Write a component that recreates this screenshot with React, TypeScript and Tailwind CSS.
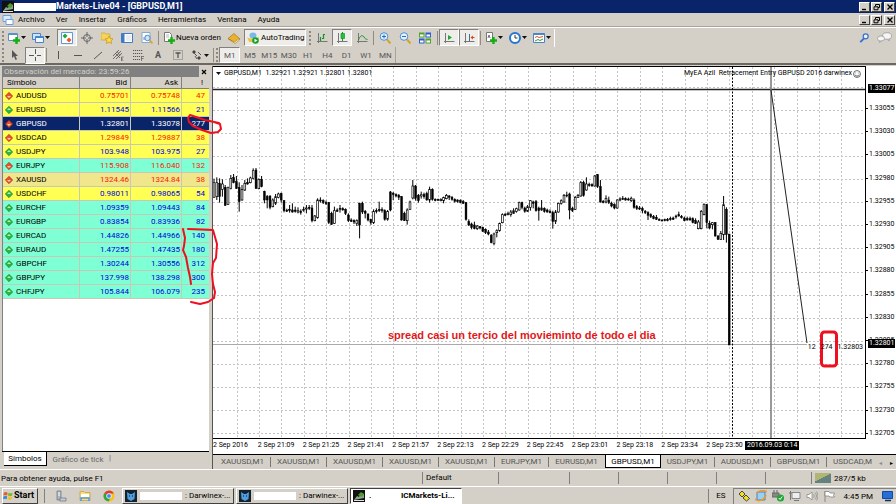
import type { ReactNode } from "react";
import clsx from "clsx";

type Quote = {
  symbol: string;
  bid: string;
  ask: string;
  spread: number;
  up: boolean;
  tone: "yellow" | "aqua" | "sand" | "selected";
  red?: boolean;
};

const quotes: Quote[] = [
  { symbol: "AUDUSD", bid: "0.75701", ask: "0.75748", spread: 47, up: false, tone: "yellow", red: true },
  { symbol: "EURUSD", bid: "1.11545", ask: "1.11566", spread: 21, up: true, tone: "yellow" },
  { symbol: "GBPUSD", bid: "1.32801", ask: "1.33078", spread: 277, up: false, tone: "selected" },
  { symbol: "USDCAD", bid: "1.29849", ask: "1.29887", spread: 38, up: false, tone: "yellow", red: true },
  { symbol: "USDJPY", bid: "103.948", ask: "103.975", spread: 27, up: true, tone: "yellow" },
  { symbol: "EURJPY", bid: "115.908", ask: "116.040", spread: 132, up: false, tone: "aqua", red: true },
  { symbol: "XAUUSD", bid: "1324.46", ask: "1324.84", spread: 38, up: false, tone: "sand", red: true },
  { symbol: "USDCHF", bid: "0.98011", ask: "0.98065", spread: 54, up: true, tone: "yellow" },
  { symbol: "EURCHF", bid: "1.09359", ask: "1.09443", spread: 84, up: true, tone: "aqua" },
  { symbol: "EURGBP", bid: "0.83854", ask: "0.83936", spread: 82, up: true, tone: "aqua" },
  { symbol: "EURCAD", bid: "1.44826", ask: "1.44966", spread: 140, up: true, tone: "aqua" },
  { symbol: "EURAUD", bid: "1.47255", ask: "1.47435", spread: 180, up: true, tone: "aqua" },
  { symbol: "GBPCHF", bid: "1.30244", ask: "1.30556", spread: 312, up: true, tone: "aqua" },
  { symbol: "GBPJPY", bid: "137.998", ask: "138.298", spread: 300, up: true, tone: "aqua" },
  { symbol: "CHFJPY", bid: "105.844", ask: "106.079", spread: 235, up: true, tone: "aqua" },
];

const tones = {
  yellow: "bg-[#ffff54]",
  aqua: "bg-[#7fffd4]",
  sand: "bg-[#f0e68c]",
  selected: "bg-[#0a246a] text-white",
};

// high, body top, body bottom, low, filled (1) or hollow (0); thirds of a pixel
const candles = [
  [86,98,142,142,0],[82,98,140,150,0],[85,100,140,158,1],[88,102,118,140,0],[105,112,166,168,1],[110,113,163,165,0],
  [75,85,115,118,0],[72,83,98,100,1],[78,95,115,117,1],[97,112,155,185,1],[105,118,150,152,0],[90,100,120,123,0],
  [85,98,102,104,1],[80,84,98,100,0],[55,62,85,88,0],[54,60,115,117,1],[85,88,116,118,0],[78,88,110,112,1],
  [122,124,150,160,1],[135,140,150,175,1],[136,138,172,178,1],[145,150,170,172,0],[132,140,160,165,0],[128,132,142,145,0],
  [128,130,150,158,1],[150,152,182,187,1],[176,180,184,186,1],[165,178,182,188,1],[160,180,186,188,1],[170,180,184,188,1],
  [172,182,186,190,0],[178,184,188,194,1],[170,178,180,185,0],[165,174,176,190,0],[165,172,174,180,1],[165,174,212,217,1],
  [195,198,212,214,0],[145,150,203,206,0],[142,150,152,158,1],[148,152,158,162,1],[152,158,160,165,1],[156,158,218,222,1],
  [185,190,223,225,1],[170,182,220,222,0],[175,180,184,186,1],[165,175,178,188,1],[172,176,180,182,1],[175,178,190,195,1],
  [190,195,212,216,1],[205,210,214,216,1],[208,212,216,222,1],[208,212,220,228,0],[158,160,225,265,1],[155,160,186,192,1],
  [180,184,190,205,1],[190,192,210,214,1],[206,208,218,224,1],[178,184,218,222,0],[175,182,184,190,1],[155,178,182,186,1],
  [172,178,182,188,0],[178,182,208,212,1],[180,184,208,212,0],[123,126,180,184,1],[126,130,134,150,1],[130,134,138,142,1],
  [132,136,142,150,1],[138,140,210,212,1],[185,190,212,213,1],[175,180,212,224,0],[152,156,178,180,0],[90,108,144,148,0],
  [105,108,145,152,1],[132,136,152,158,1],[125,134,138,146,0],[128,134,140,146,1],[125,130,150,152,1],[110,118,150,158,0],
  [115,118,148,152,1],[145,148,152,154,1],[146,148,150,152,1],[145,148,152,154,0],[140,142,152,160,0],[132,136,146,148,0],
  [135,138,142,150,1],[138,142,148,152,1],[145,148,154,158,1],[148,150,155,158,1],[148,152,158,160,1],[150,155,160,162,1],
  [156,158,208,212,1],[208,214,225,228,1],[218,222,232,238,1],[215,225,236,238,1],[225,228,236,240,0],[228,230,234,238,1],
  [230,232,244,246,1],[235,238,248,252,1],[240,246,252,256,1],[252,256,278,280,1],[248,252,280,286,0],[238,242,248,262,0],
  [218,220,242,245,0],[190,194,218,220,0],[190,192,196,198,1],[185,190,194,196,0],[180,186,194,200,0],[175,182,190,192,0],
  [173,176,184,188,0],[155,158,180,182,0],[155,158,172,178,1],[170,174,184,188,1],[165,170,184,186,0],[150,152,172,182,0],
  [152,156,160,175,1],[150,155,182,185,1],[170,174,182,212,1],[150,174,180,182,0],[172,176,184,188,1],[176,180,186,188,1],
  [178,184,188,190,1],[182,188,215,236,1],[180,186,214,222,0],[158,160,186,188,0],[148,152,160,164,0],[132,136,156,158,0],
  [125,135,138,142,1],[128,132,180,208,1],[170,176,182,186,1],[138,142,178,180,0],[132,136,142,144,0],[93,98,138,140,0],
  [92,97,136,140,1],[82,102,120,122,0],[98,104,106,110,1],[100,104,108,110,1],[75,78,108,110,0],[72,74,110,114,1],
  [90,110,156,158,1],[150,154,158,160,1],[136,145,156,160,0],[140,150,158,162,1],[155,160,168,172,1],[160,164,174,178,1],
  [148,150,174,176,0],[142,147,150,154,0],[138,145,148,150,1],[142,146,150,152,1],[143,147,150,152,1],[140,145,152,156,0],
  [145,150,172,176,1],[165,170,176,180,1],[168,174,177,180,1],[170,176,182,190,1],[180,184,188,192,1],[184,188,196,210,1],
  [190,194,200,204,1],[195,200,206,208,1],[195,202,208,210,1],[205,208,210,212,1],[208,210,212,214,1],[206,209,212,214,1],
  [204,208,212,214,1],[200,206,208,212,1],[200,204,208,210,1],[194,198,200,206,1],[185,194,198,200,1],[195,200,202,206,1],
  [200,204,212,214,1],[200,206,210,212,1],[200,206,210,212,1],[202,206,218,220,1],[205,212,220,222,1],[210,216,236,238,0],
  [180,184,236,238,0],[160,164,194,196,0],[162,164,218,235,1],[212,220,234,238,1],[216,218,224,238,0],[216,218,258,260,1],
  [255,258,268,270,1],[243,250,268,270,0],[138,164,254,270,0],[172,178,254,278,1],[252,252,585,585,1],
];

const prices = [
  "1.33055", "1.33030", "1.33005", "1.32980", "1.32955", "1.32930", "1.32905", "1.32880",
  "1.32855", "1.32830", "1.32805", "1.32780", "1.32755", "1.32730", "1.32705",
];

const times = [
  "2 Sep 2016", "2 Sep 21:09", "2 Sep 21:25", "2 Sep 21:41", "2 Sep 21:57", "2 Sep 22:13",
  "2 Sep 22:29", "2 Sep 22:45", "2 Sep 23:01", "2 Sep 23:18", "2 Sep 23:34", "2 Sep 23:50",
];

const chartTabs = [
  "XAUUSD,M1", "XAUUSD,M1", "XAUUSD,M1", "XAUUSD,M1", "XAUUSD,M1", "EURJPY,M1",
  "EURUSD,M1", "GBPUSD,M1", "USDJPY,M1", "AUDUSD,M1", "GBPUSD,M1",
];

const Icon = ({ children, className = "size-3" }: { children: ReactNode; className?: string }) => (
  <svg viewBox="0 0 12 12" fill="none" className={clsx("shrink-0", className)} aria-hidden="true">
    {children}
  </svg>
);

const Plus = () => <path d="M8.500 5v7M5 8.500h7" stroke="#12b012" strokeWidth="2.400" />;

const Axes = () => <path d="M2.500 1v10M1 9.500h10.500" stroke="#777" />;

const Caret = () => (
  <svg viewBox="0 0 5 3" className="h-[3px] w-[5px] shrink-0" aria-hidden="true">
    <path d="M0 0h5L2.500 3z" fill="#111" />
  </svg>
);

const Grip = () => <span className="mx-px h-3.5 w-0.5 shrink-0 border-l-2 border-dotted border-[#8c8880]" />;

const Sep = () => <span className="mx-px h-3.5 w-px shrink-0 bg-[#908c84]" />;

type ToolProps = { label: string; children: ReactNode; pressed?: boolean; menu?: boolean };

const Tool = ({ label, children, pressed, menu }: ToolProps) => (
  <button
    type="button"
    aria-label={label}
    className={clsx(
      "flex h-[17px] shrink-0 items-center",
      menu ? "w-6 gap-px pl-[3px]" : "w-5 justify-center",
      pressed && "border border-t-[#808080] border-r-white border-b-white border-l-[#808080] bg-[#efede9]",
    )}
  >
    {children}
    {menu && <Caret />}
  </button>
);

const WindowButtons = () => (
  <div className="flex gap-px pr-px">
    {["Minimizar", "Restaurar", "Cerrar"].map((label, i) => (
      <button
        key={label}
        type="button"
        aria-label={label}
        className={clsx(
          "flex h-2.5 w-[11px] items-center justify-center border border-t-white border-r-[#404040] border-b-[#404040] border-l-white bg-[#d4d0c8]",
          i === 2 && "ml-px",
        )}
      >
        <svg viewBox="0 0 8 8" className="size-2" fill="none" stroke="#000" aria-hidden="true">
          {i === 0 && <path d="M1 6.500h4" strokeWidth="1.400" />}
          {i === 1 && <path d="M2.500 3V1.500h4v3H5M1 3.800h4v3H1z" />}
          {i === 2 && <path d="M1.500 1.500l5 5M6.500 1.500l-5 5" strokeWidth="1.300" />}
        </svg>
      </button>
    ))}
  </div>
);

const AppLogo = () => (
  <Icon>
    <path d="M0 0h12v12H0z" fill="#111" />
    <path d="M1 10l3-4 2 1 2-4 3 1v4z" fill="#8aa58a" />
    <path d="M5 5l3-3 3 2-2 3z" fill="#4f9a2c" />
    <path d="M1 10.500h10" stroke="#e5e5e5" />
  </Icon>
);

const TitleBar = () => (
  <header className="flex h-[13px] items-center bg-[#0a246a] text-white">
    <span className="w-3.5 pl-0.5"><AppLogo /></span>
    <span className="h-2 w-[42px] bg-white" />
    <h1 className="flex-1 text-[9px] font-bold">Markets-Live04 - [GBPUSD,M1]</h1>
    <WindowButtons />
  </header>
);

const MenuBar = () => (
  <nav className="flex h-3.5 items-center border-b border-[#a8a49c]">
    <Icon className="mx-0.5 size-3">
      <path d="M1 1.500h8v6H1z" fill="#dcecff" stroke="#6d9fdc" />
      <path d="M4 5.500h7v5H4z" fill="#fff" stroke="#6d9fdc" />
    </Icon>
    <div className="flex flex-1 gap-[11px] pl-0.5">
      {["Archivo", "Ver", "Insertar", "Gráficos", "Herramientas", "Ventana", "Ayuda"].map((item) => (
        <button key={item} type="button">{item}</button>
      ))}
    </div>
    <WindowButtons />
  </nav>
);

const MainToolbar = () => (
  <div className="flex h-5 items-center border-t border-white pl-px">
    <Grip />
    <Tool label="Nuevo gráfico" menu>
      <Icon><path d="M.5 1.500h9v7h-9z" fill="#fff" stroke="#5b8fc9" /><path d="M.5 2.500h9" stroke="#5b8fc9" /><Plus /></Icon>
    </Tool>
    <Tool label="Perfiles" menu>
      <Icon><path d="M.5 1.500h8v6h-8z" fill="#cfe3fa" stroke="#4783c8" /><path d="M3.500 4.500h8v6h-8z" fill="#eef6ff" stroke="#4783c8" /><path d="M3.500 5.500h8" stroke="#4783c8" /></Icon>
    </Tool>
    <span className="w-1" />
    <Tool label="Observación del mercado" pressed>
      <Icon><path d="M.5.5h11v11H.5z" fill="#fff" stroke="#5b9bdc" /><path d="M1.500 4l2.500-2.500L6.500 4 4 6.500z" fill="#22a83a" /><path d="M5.500 8L8 5.500l2.500 2.500L8 10.500z" fill="#f0562b" /></Icon>
    </Tool>
    <Tool label="Ventana de datos">
      <Icon><circle cx="6" cy="6" r="3.500" stroke="#666" /><path d="M6 0v5M6 7v5M0 6h5M7 6h5" stroke="#666" /></Icon>
    </Tool>
    <Tool label="Navegador">
      <Icon><path d="M0 1h4l1 1h4v6H0z" fill="#f5d35c" stroke="#c69a1e" strokeWidth=".6" /><path d="M8 4l1.200 2.500 2.800.4-2 1.900.5 2.700L8 10.200 5.500 11.500 6 8.800 4 6.900l2.800-.4z" fill="#ffd83c" stroke="#b88a12" strokeWidth=".6" /></Icon>
    </Tool>
    <Tool label="Terminal">
      <Icon><path d="M.5 1.500h11v9H.5z" fill="#fff" stroke="#3d7bc7" /><path d="M1 2h2.500v8H1z" fill="#3d7bc7" /><path d="M5 4h5.500M5 6h5.500M5 8h5.500" stroke="#b8cde8" strokeWidth=".7" /></Icon>
    </Tool>
    <Tool label="Probador de estrategias">
      <Icon><path d="M1 .5h8v10H1z" fill="#fff" stroke="#86a9cf" /><path d="M3 8V5M5 7V3M7 8V4" stroke="#7797bc" /><circle cx="6.500" cy="6" r="2.700" fill="#d7ebff" fillOpacity=".8" stroke="#4b88cc" /><path d="M8.500 8l3 3.500" stroke="#d9a227" strokeWidth="1.600" /></Icon>
    </Tool>
    <Sep />
    <button type="button" className="flex h-[17px] w-16 shrink-0 items-center gap-px pl-[3px] whitespace-nowrap">
      <Icon><path d="M1.500.5h5l2 2v7h-7z" fill="#fff" stroke="#777" /><path d="M3 3h3M3 5h3" stroke="#999" strokeWidth=".7" /><Plus /></Icon>
      Nueva orden
    </button>
    <Tool label="MetaEditor">
      <Icon><path d="M0 6.500l6-5 6 5.500-5 4z" fill="#e7b32f" stroke="#9a6d10" strokeWidth=".6" /><path d="M.5 7l6 3 5-3.500v1.500L7 11.500z" fill="#fff3c4" stroke="#9a6d10" strokeWidth=".5" /></Icon>
    </Tool>
    <button type="button" className="flex h-[17px] w-[62px] shrink-0 items-center gap-0.5 border border-t-[#808080] border-r-white border-b-white border-l-[#808080] bg-[#efede9] pl-0.5 whitespace-nowrap">
      <Icon><ellipse cx="6" cy="3.500" rx="3.500" ry="3" fill="#7db9e8" /><path d="M0 5c3 2 9 2 12 0l-1 5H2z" fill="#edc44a" /><circle cx="8.500" cy="8.500" r="3.300" fill="#16a32a" /><path d="M7.500 6.800v3.400l3-1.700z" fill="#fff" /></Icon>
      AutoTrading
    </button>
    <span className="w-0.5" />
    <Grip />
    <Tool label="Gráfico de barras">
      <Icon><Axes /><path d="M4.500 5v4M7.500 2v5M6 6.500h1.500M7.500 2.500H9" stroke="#14942a" strokeWidth="1.200" /></Icon>
    </Tool>
    <Tool label="Gráfico de velas" pressed>
      <Icon><Axes /><path d="M6.500 0v9" stroke="#14942a" /><path d="M5 1.500h3.500v5H5z" fill="#26c13f" stroke="#14942a" strokeWidth=".7" /></Icon>
    </Tool>
    <Tool label="Gráfico de líneas">
      <Icon><Axes /><path d="M2.500 8C4 3 7 3 8 5s2 2 3.500 2.500" stroke="#14942a" /></Icon>
    </Tool>
    <Sep />
    <Tool label="Acercar">
      <Icon><circle cx="5" cy="4.500" r="3.800" fill="#e2f1ff" stroke="#4a8ed6" /><path d="M3 4.500h4M5 2.500v4" stroke="#2b6cb8" /><path d="M8 7.500l3.500 4" stroke="#d8a428" strokeWidth="2" /></Icon>
    </Tool>
    <Tool label="Alejar">
      <Icon><circle cx="5" cy="4.500" r="3.800" fill="#e2f1ff" stroke="#4a8ed6" /><path d="M3 4.500h4" stroke="#2b6cb8" /><path d="M8 7.500l3.500 4" stroke="#d8a428" strokeWidth="2" /></Icon>
    </Tool>
    <Tool label="Mosaico">
      <Icon><path d="M0 .5h5.500v5H0zM6.500 6.500H12v5H6.500z" fill="#4da62a" /><path d="M6.500.5H12v5H6.500zM0 6.500h5.500v5H0z" fill="#2f5fd0" /><path d="M1 2.500h3.500v2H1zM7.500 2.500H11v2H7.500zM1 8.500h3.500v2H1zM7.500 8.500H11v2H7.500z" fill="#fff" /></Icon>
    </Tool>
    <span className="w-px" />
    <Sep />
    <Tool label="Desplazamiento automático" pressed>
      <Icon><Axes /><path d="M5 3v5l4-2.500z" fill="#21a637" /></Icon>
    </Tool>
    <Tool label="Desplazar gráfico" pressed>
      <Icon><Axes /><path d="M6.500 2v7" stroke="#3f6fa8" /><path d="M7.500 5.500L10 3.500v4z" fill="#d84a1b" /><path d="M9 5.500h2.500" stroke="#d84a1b" /></Icon>
    </Tool>
    <Sep />
    <Tool label="Indicadores" menu>
      <Icon><path d="M1.500.5h6v9h-6z" fill="#fff" stroke="#777" /><path d="M3 6l1-3 1 3" stroke="#555" strokeWidth=".8" /><Plus /></Icon>
    </Tool>
    <Tool label="Períodos" menu>
      <Icon><circle cx="6" cy="6" r="5" fill="#fff" stroke="#2474d2" strokeWidth="2" /><path d="M6 3v3h2.500" stroke="#333" /></Icon>
    </Tool>
    <Tool label="Plantillas" menu>
      <Icon><path d="M.5 1.500h11v9H.5z" fill="#fff" stroke="#4783c8" /><path d="M.5 2.200h11" stroke="#4783c8" strokeWidth="1.500" /><path d="M2 5.500l2-1 2 1 4-1" stroke="#d05a35" /><path d="M2 9l3-1.500 2 1 3-1.500" stroke="#2c9c48" /></Icon>
    </Tool>
    <span className="h-[18px] w-px bg-white" />
    <div className="ml-auto flex items-center pr-0.5">
      <Tool label="Buscar">
        <Icon className="size-2.5"><circle cx="8" cy="4" r="3" fill="#e9f2ff" stroke="#3970d0" strokeWidth="1.500" /><path d="M6 6.500L1.500 11" stroke="#3970d0" strokeWidth="2.400" /></Icon>
      </Tool>
      <Tool label="Chat">
        <svg viewBox="0 0 15 11" className="h-[11px] w-[15px]" fill="#f5f5f5" stroke="#999" strokeWidth=".8" aria-hidden="true">
          <ellipse cx="10" cy="4" rx="4.500" ry="3.300" /><path d="M11 7l1 2 .8-2.500" />
          <ellipse cx="4" cy="6.500" rx="3.500" ry="2.600" /><path d="M3 9L2.500 10.500 4.500 9" />
        </svg>
      </Tool>
    </div>
  </div>
);

const DrawingToolbar = () => (
  <div className="flex h-[18px] items-center border-b-2 border-[#6b6862] pl-px text-[#555]">
    <Grip />
    <Tool label="Cursor"><Icon><path d="M3 1v8l2-1.800L6.500 11l1.500-.7L6.500 7H9z" fill="#555" /></Icon></Tool>
    <Tool label="Cruz" pressed><Icon><path d="M6.500 0v5M6.500 8v4M0 6.500h5M8 6.500h4" stroke="#555" /></Icon></Tool>
    <Sep />
    <Tool label="Línea vertical"><Icon><path d="M6.500 2v8" stroke="#555" /></Icon></Tool>
    <Tool label="Línea horizontal"><Icon><path d="M2 6.500h8" stroke="#555" /></Icon></Tool>
    <Tool label="Línea de tendencia"><Icon><path d="M2 10l8-7" stroke="#555" /></Icon></Tool>
    <Tool label="Canal equidistante"><Icon><path d="M1 7l6-6M1 10l8-8M4 10l6-6M3 4l5 5M5 2l3 5" stroke="#555" strokeWidth=".8" /><path d="M9.500 8v4M11.500 8H9.500M11 10H9.500M11.500 12H9.500" stroke="#555" strokeWidth=".7" /></Icon></Tool>
    <Tool label="Fibonacci"><Icon><path d="M1 1.500h10M1 4.500h10M1 7.500h7M1 10.500h7" stroke="#555" strokeDasharray="1.200 .8" /><path d="M9.500 7v5M12 7.500H9.500M11.500 9.500H9.500" stroke="#555" strokeWidth=".7" /></Icon></Tool>
    <Tool label="Texto"><span className="text-[9px] font-bold">A</span></Tool>
    <Tool label="Etiqueta de texto"><Icon><path d="M1.500 1.500h9v9h-9z" stroke="#777" strokeDasharray="1 1" /><path d="M3.500 4h5M6 4v5" stroke="#555" strokeWidth="1.300" /></Icon></Tool>
    <Tool label="Flechas" menu><Icon><path d="M1 3l2-2 2 2-2 2zM6 9l2-2 2 2-2 2z" fill="#444" /><path d="M3 4l3 3M7 3l3 3M4 7l2 3" stroke="#555" /></Icon></Tool>
    <Sep />
    <Grip />
    <div className="flex w-44">
      {["M1", "M5", "M15", "M30", "H1", "H4", "D1", "W1", "MN"].map((frame, i) => (
        <button
          key={frame}
          type="button"
          className={clsx(
            "flex h-4 flex-1 items-center justify-center",
            i === 0 && "border border-t-[#808080] border-r-white border-b-white border-l-[#808080] bg-[#efede9]",
          )}
        >
          {frame}
        </button>
      ))}
    </div>
    <span className="h-4 w-px bg-[#a8a49c]" />
  </div>
);

const MarketWatch = () => (
  <aside className="relative flex w-[212px] shrink-0 flex-col pl-0.5">
    <div className="mr-[3px] flex h-[11px] items-center justify-between bg-[#808080] pl-0.5 text-[#d4d0c8]">
      <h2>Observación del mercado: 23:59:26</h2>
      <button type="button" aria-label="Cerrar panel" className="flex h-full w-2.5 items-center justify-center bg-[#d4d0c8]">
        <svg viewBox="0 0 6 6" className="size-1.5" aria-hidden="true"><path d="M1 1l4 4M5 1L1 5" stroke="#000" strokeWidth="1.200" /></svg>
      </button>
    </div>
    <div className="mr-[3px] flex-1 border-l border-[#808080] bg-white">
      <table className="w-full table-fixed border-separate border-spacing-0 text-right">
        <thead>
          <tr className="bg-[#d4d0c8]">
            <th className="h-3 border-r border-b border-[#808080] p-0 pl-1 text-left font-normal">Símbolo</th>
            <th className="w-[51px] border-r border-b border-[#808080] p-0 pr-[3px] font-normal">Bid</th>
            <th className="w-[51px] border-r border-b border-[#808080] p-0 pr-[3px] font-normal">Ask</th>
            <th className="w-[27px] border-b border-[#808080] p-0 pr-1.5 font-normal">!</th>
          </tr>
        </thead>
        <tbody>
          {quotes.map((q) => (
            <tr key={q.symbol} className={tones[q.tone]}>
              <td className="h-3.5 border-r border-b border-[#c8c8b8] p-0 text-left">
                <span className="flex items-center gap-[3px] pl-0.5">
                  <svg viewBox="0 0 8 8" className="size-2" aria-hidden="true">
                    <path d="M4 .3L7.700 4 4 7.700.3 4z" fill={q.up ? "#2fb344" : "#e8502e"} stroke={q.up ? "#157a26" : "#a52a12"} strokeWidth=".6" />
                    <path d={q.up ? "M4 2l2 2H2z" : "M4 6l2-2H2z"} fill={q.up ? "#b5f5a8" : "#ffd0a0"} />
                  </svg>
                  {q.symbol}
                </span>
              </td>
              {[q.bid, q.ask, q.spread].map((value, i) => (
                <td
                  key={i}
                  className={clsx(
                    "border-b border-[#c8c8b8] p-0",
                    i < 2 ? "border-r pr-px" : "pr-1",
                    q.tone !== "selected" && (q.red ? "text-[#ff2000]" : "text-[#0000e0]"),
                  )}
                >
                  {value}
                </td>
              ))}
            </tr>
          ))}
        </tbody>
      </table>
    </div>
    <div className="mr-[3px] flex h-[18px] border-t border-black pl-0.5">
      <button type="button" className="h-3.5 w-[43px] border-r border-b border-black bg-white">Símbolos</button>
      <button type="button" className="h-3.5 w-[62px] text-[#666]">Gráfico de tick</button>
      <span className="text-[#666]">|</span>
    </div>
    {/* hand-drawn marks over the spread column */}
    <svg viewBox="0 0 230 250" className="pointer-events-none absolute top-0 left-0 z-10 h-[250px] w-[230px]" fill="none" stroke="#ee1020" strokeWidth="2" strokeLinecap="round" strokeLinejoin="round" aria-hidden="true">
      <path d="M219 57L205 54 190 49 188 52 189 56 193 60 202 64 211 67 218 66 221 63 220 58 214 56" />
      <path d="M183 163L185 172 184 180 183 184 186 191 188 202 190 211 191 218" />
      <path d="M188 163L213 164 215 171 217 178 216 192 213 197 212 208 213 218 215 226 214 232 208 236 200 238 191 236" />
    </svg>
  </aside>
);

const verticalGrid = Array.from({ length: 28 }, (_, i) => 24 + i * 22.4);
const horizontalGrid = Array.from({ length: 16 }, (_, i) => 20.5 + i * 23.07);

const Plot = () => (
  <svg viewBox="0 0 652 371" preserveAspectRatio="none" className="absolute inset-0 size-full" fill="none" aria-hidden="true">
    <g stroke="#c4c4c4" strokeDasharray="2 2" shapeRendering="crispEdges">
      {verticalGrid.map((x) => <path key={x} d={`M${x} 0V371`} />)}
      {horizontalGrid.map((y) => <path key={y} d={`M0 ${y}H652`} />)}
    </g>
    {/* bid line, crosshair and period separator */}
    <path d="M0 277.500H594" stroke="#aaa" />
    <path d="M0 22.500H652" stroke="#222" strokeWidth="1.500" />
    <path d="M558 0V371" stroke="#777" strokeWidth="1.500" />
    <path d="M519.500 0V371" stroke="#000" strokeDasharray="2 1.500" />
    <g stroke="#000">
      {candles.map(([high, top, bottom, low, filled], i) => {
        const x = 1 + i * 2.8;
        const y = (v: number) => 83 + v / 3;
        return (
          <g key={i}>
            <path d={`M${x} ${y(high)}V${y(low)}`} />
            <rect
              x={x - 0.9}
              y={y(top)}
              width="1.800"
              height={Math.max((bottom - top) / 3, 1)}
              fill={filled ? "#000" : "#fff"}
              strokeWidth={filled ? 0.5 : 0.7}
            />
          </g>
        );
      })}
    </g>
    <path d="M558 23L594 276" stroke="#222" />
    <rect x="608.500" y="265" width="15" height="34" rx="3" stroke="#ee1020" strokeWidth="3" />
  </svg>
);

const Chart = () => (
  <section className="flex min-w-0 flex-1 flex-col border-l border-[#555]">
    <div className="flex flex-1 bg-white text-[7px]">
      <div className="relative flex-1 overflow-hidden border-t border-r border-b border-black">
        <Plot />
        <div className="relative flex items-center justify-between pt-px pr-1 pl-[3px]">
          <p className="flex items-center gap-[3px]"><Caret />GBPUSD,M1&nbsp; 1.32921 1.32921 1.32801 1.32801</p>
          <p className="flex items-center gap-px">
            MyEA Azil&nbsp; Retracement Entry GBPUSD 2016 darwinex
            <Icon className="size-2"><circle cx="6" cy="6" r="5.200" stroke="#222" /><path d="M3 7c1 3 5 3 6 0M4 4v1M8 4v1" stroke="#222" /></Icon>
          </p>
        </div>
        <p className="absolute top-[262px] left-[175px] font-['Liberation_Sans',Arial,sans-serif] text-[11px] leading-3 font-bold whitespace-nowrap text-[#e01818]">
          spread casi un tercio del movieminto de todo el dia
        </p>
        <p className="absolute top-[275px] right-0.5 flex gap-[5px]">
          <span>12</span><span>274</span><span>1.32803</span>
        </p>
      </div>
      <div className="relative flex w-[30px] shrink-0 flex-col justify-between pt-[37px] leading-[11px]">
        {prices.map((price) => (
          <span key={price} className="flex items-center gap-px before:h-px before:w-0.5 before:bg-black">{price}</span>
        ))}
        <span className="absolute top-[18px] left-0.5 bg-black px-px leading-[9px] text-white">1.33077</span>
        <span className="absolute top-[273px] left-0.5 bg-black px-px leading-[9px] text-white">1.32801</span>
      </div>
    </div>
    <div className="relative h-[15px] bg-white text-[7px] leading-3">
      <div className="grid w-[538px] grid-cols-12 whitespace-nowrap">
        {times.map((time) => <span key={time}>{time}</span>)}
      </div>
      <span className="absolute top-0.5 left-[532px] bg-black px-0.5 leading-[9px] whitespace-nowrap text-white">2016.09.03 0:14</span>
    </div>
    <div className="flex h-[15px] overflow-hidden border-t border-black pl-0.5 whitespace-nowrap text-[#555]">
      {chartTabs.map((tab, i) => (
        <button
          key={i}
          type="button"
          className={clsx(
            "flex h-[13px] shrink-0 items-center justify-center",
            tab.includes("JPY") ? "w-[54px]" : "w-14",
            i === 7
              ? "border-x border-b border-black bg-white text-black"
              : "before:mr-auto after:ml-auto after:h-2.5 after:w-px",
            i !== 7 && i !== 6 && "after:bg-[#777]",
          )}
        >
          {tab}
        </button>
      ))}
      <button type="button" className="h-[13px] shrink-0 pr-[3px] pl-1.5 text-left">USDCAD,M</button>
      <button type="button" aria-label="Pestañas anteriores" className="px-1 text-[6px] text-[#888]">◂</button>
      <button type="button" aria-label="Pestañas siguientes" className="px-1 text-[6px] text-black">▸</button>
    </div>
  </section>
);

const StatusBar = () => (
  <footer className="flex h-[17px] items-center border-t border-white">
    <p className="flex-1 pl-px">Para obtener ayuda, pulse F1</p>
    <span className="h-3 w-[76px] shrink-0 border-l border-[#808080] pl-[3px] leading-3">Default</span>
    <span className="h-3 w-[71px] shrink-0 border-l border-[#808080]" />
    {[0, 1, 2, 3].map((i) => (
      <span key={i} className="h-3 w-[49px] shrink-0 border-l border-[#808080]" />
    ))}
    <span className="h-3 w-[46px] shrink-0 border-l border-[#808080]" />
    <span className="flex h-3 w-[85px] shrink-0 items-center gap-0.5 border-l border-[#808080] pl-[3px]">
      <svg viewBox="0 0 17 10" className="h-2.5 w-[17px]" aria-hidden="true">
        <path d="M1 0v10M3 0v10M5 0v10M7 0v10M9 0v10M11 0v10M13 0v10M15 0v10" stroke="#8a9a1e" />
        <path d="M1 8v2M3 7v3M5 6v4M7 5v5M9 4v6M11 3v7M13 2v8M15 1v9" stroke="#1d4f8c" />
      </svg>
      287/5 kb
    </span>
  </footer>
);

const raised = "border border-t-white border-r-[#404040] border-b-[#404040] border-l-white";

const Taskbar = () => (
  <div className="flex h-[18px] items-center border-t border-white pl-0.5">
    <button type="button" className={clsx("flex h-4 w-9 shrink-0 items-center gap-px text-[9px] font-bold", raised)}>
      <Icon className="size-2.5">
        <path d="M1 2c2-1 3-1 4.500 0L5 5.500C3.500 4.500 2 4.700.5 5.500z" fill="#ea5a2a" /><path d="M6.500 2c2 1 3 1 5 0L11 5.500c-2 1-3 1-5 0z" fill="#7ab82c" />
        <path d="M.5 6.500c2-1 3-1 4.500 0L4.500 10C3 9 2 9.200 0 10z" fill="#3c8bd8" /><path d="M6 6.500c2 1 3 1 5 0l-.5 3.500c-2 1-3 1-5 0z" fill="#f5c02c" />
      </Icon>
      Start
    </button>
    <span className="ml-1.5 h-3.5 w-px bg-[#808080]" />
    <div className="flex gap-3 pr-[7px] pl-2.5">
      <button type="button" aria-label="Administrador del servidor">
        <Icon><path d="M2 1h4v9H2z" fill="#aab6c2" stroke="#66727e" strokeWidth=".7" /><path d="M3 3h2M3 5h2" stroke="#fff" /><path d="M5 8h6v3H5z" fill="#c3ccd4" stroke="#66727e" strokeWidth=".7" /></Icon>
      </button>
      <button type="button" aria-label="Explorador">
        <Icon><path d="M1 1.500h4l1 1h5v8H1z" fill="#f7dc7c" stroke="#c79c32" strokeWidth=".7" /><path d="M2 4h8v3H2z" fill="#fff" /><path d="M2 11V8h8v3" stroke="#4f9bdc" strokeWidth="1.500" /></Icon>
      </button>
      <button type="button" aria-label="Chrome">
        <Icon><circle cx="6" cy="6" r="5.500" fill="#fbc116" /><path d="M6 6L1.200 3.300A5.500 5.500 0 0110.900 3.500H6z" fill="#e33b2e" /><path d="M6 6L1.200 3.300A5.500 5.500 0 005.500 11.500L8 7z" fill="#30a24c" /><circle cx="6" cy="6" r="2.400" fill="#4587f4" stroke="#fff" strokeWidth=".8" /></Icon>
      </button>
    </div>
    <div className="flex gap-0.5 whitespace-nowrap">
      {[0, 1].map((i) => (
        <button key={i} type="button" className={clsx("flex h-4 w-28 items-center gap-[3px] pl-0.5", raised)}>
          <Icon><path d="M0 0h12v12H0z" fill="#14202c" /><path d="M2 2l3 2h2l3-2-.5 7L6 11 2.500 9z" fill="#4f9fe0" /><path d="M4 6h1M7 6h1" stroke="#111" /></Icon>
          <span className="h-2 w-[42px] bg-white" />
          <span>: Darwinex-...</span>
        </button>
      ))}
      <button type="button" className="flex h-4 w-28 items-center gap-1 border border-t-[#404040] border-r-white border-b-white border-l-[#404040] bg-white pl-0.5 font-bold">
        <AppLogo />
        <span className="w-7 text-left">.</span>
        <span>ICMarkets-Li...</span>
      </button>
    </div>
    <div className="ml-auto flex h-4 items-center">
      <span className="h-3.5 w-px bg-[#808080]" />
      <button type="button" className="px-[7px]">ES</button>
      <div className="flex h-4 items-center gap-[5px] border-t border-l border-[#808080] pr-0.5 pl-1">
        <Icon><path d="M1 4l3-3 3 3-3 3z" fill="#f2e01c" stroke="#222" strokeWidth=".8" /><path d="M5 8l3-3 3.500 3.500-3 2.500z" fill="#f2e01c" stroke="#222" strokeWidth=".8" /></Icon>
        <Icon><path d="M2 2h8v8H2z" fill="#9ad0f0" stroke="#3d88c8" /><path d="M0 9c3 3 9 2 11-4M2 3C5 0 9 0 12 2" stroke="#f0962c" strokeWidth="1.500" /></Icon>
        <Icon><path d="M2 0v3M5 0v3M0 3h7v4H0z" fill="#888" stroke="#666" /><circle cx="8.500" cy="8" r="3.600" fill="#20a838" /><path d="M6.800 8l1.300 1.500 2.200-3" stroke="#fff" /></Icon>
        <Icon><path d="M3 2.500h8v6H3z" fill="#eee" stroke="#888" /><path d="M5 10.500h5M1.500 1v9M0 3h3" stroke="#777" /></Icon>
        <Icon><path d="M1 4.500h2L6 2v8L3 7.500H1z" fill="#fff" stroke="#888" strokeWidth=".8" /><path d="M7.500 4c1 1 1 3 0 4M9 2.500c2 2 2 5 0 7M10.500 1.500c2 3 2 6 0 9" stroke="#888" strokeWidth=".7" /></Icon>
        <Icon><path d="M2 1v11" stroke="#888" /><path d="M2 1.500h4l1 1.500h4.500l-1 2.500 1 1.500H7L6 6H2z" fill="#fff" stroke="#777" strokeWidth=".7" /></Icon>
        <time className="mx-1 whitespace-nowrap">4:45 PM</time>
        <Icon><path d="M.5 1.500h10v7H.5z" fill="#2370d8" stroke="#144a9c" /><path d="M3 10.500h6" stroke="#0e2e66" strokeWidth="1.500" /></Icon>
      </div>
    </div>
  </div>
);

const App = () => {
  return (
    <div className="flex h-screen min-h-[504px] w-full flex-col overflow-hidden bg-[#d4d0c8] font-[Roboto,sans-serif] text-[8px] leading-[11px] text-black">
      <TitleBar />
      <MenuBar />
      <MainToolbar />
      <DrawingToolbar />
      <main className="flex min-h-0 flex-1 pt-px">
        <MarketWatch />
        <Chart />
      </main>
      <StatusBar />
      <Taskbar />
    </div>
  );
};

export default App;
